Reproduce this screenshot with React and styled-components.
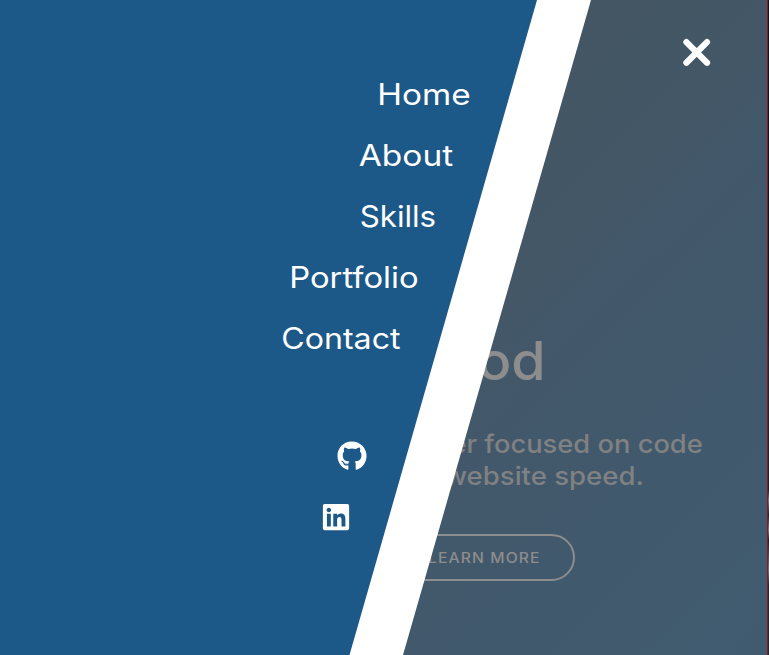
import React from "react";
import styled, { createGlobalStyle } from "styled-components";
import { FaGithub, FaLinkedin } from "react-icons/fa";

const GlobalStyle = createGlobalStyle`
  * { box-sizing: border-box; }
  body { margin: 0; overflow: hidden; font-family: Inter, "Open Sans", sans-serif; }
`;

const Page = styled.div`
  position: relative;
  display: grid;
  grid-template-columns: 1fr 2px;
  width: 100%;
  height: 100vh;
  overflow: hidden;
`;

const Hero = styled.main`
  display: flex;
  flex-direction: column;
  align-items: flex-end;
  padding-top: 329px;
  background: linear-gradient(135deg, #465462 20%, #445663 45%, #42586b 68%, #405b70 100%);
`;

const Photo = styled.aside`
  border-left: 1px solid #861b22;
  background: linear-gradient(#11161a 0 320px, #24282b 350px, #222 490px, #777 500px, #252525 515px, #817777 530px, #251d1d 540px, #737373 570px, #24292c 585px);
`;

const Fit = styled.span`
  display: block;
  white-space: nowrap;
  transform: scaleX(${(p) => p.$scale || 1});
  transform-origin: right center;
`;

const Name = styled.h1`
  margin: 0 221px 0 0;
  font-size: 53px;
  line-height: 65px;
  font-weight: 450;
  color: #8d8d8d;
`;

const Tagline = styled.p`
  display: flex;
  flex-direction: column;
  margin: 34px 0 0;
  font-size: 25.5px;
  line-height: 32px;
  font-weight: 500;
  color: #7f8182;
`;

const Line = styled.span`
  display: flex;
  justify-content: flex-end;
  margin-right: ${(p) => p.$inset}px;
`;

const LearnMore = styled.button`
  display: flex;
  align-items: center;
  justify-content: flex-end;
  width: 184px;
  height: 47px;
  margin: 42px 192px 0 0;
  padding: 0 32px 0 0;
  border: 2px solid #8d8d8d;
  border-radius: 24px;
  background: none;
  font: 500 14px Inter, sans-serif;
  letter-spacing: 1px;
  color: #8d8d8d;
`;

const Stripe = styled.div`
  position: absolute;
  inset: 0;
  background: #fff;
  clip-path: polygon(0 0, 591px 0, 403px 655px, 0 655px);
`;

const Menu = styled.nav`
  position: absolute;
  inset: 0;
  padding-top: 63px;
  background: #1c5888;
  clip-path: polygon(0 0, 537px 0, 349.5px 655px, 0 655px);
`;

const Links = styled.ul`
  display: flex;
  flex-direction: column;
  width: 471px;
  margin: 0;
  padding: 0;
  list-style: none;
`;

const Item = styled.li`
  display: flex;
  align-items: center;
  justify-content: flex-end;
  height: 61px;
  margin-right: ${(p) => p.$inset}px;
`;

const MenuLink = styled.a`
  font-size: 29.5px;
  line-height: 36px;
  font-weight: 370;
  color: #fff;
`;

const Socials = styled.div`
  display: flex;
  flex-direction: column;
  align-items: flex-end;
  gap: 31px;
  width: 366px;
  margin-top: 73px;
  color: #fff;
`;

const Social = styled.a`
  display: flex;
  margin-right: ${(p) => p.$inset}px;
  svg { display: block; }
`;

const Close = styled.button`
  position: absolute;
  top: 38px;
  left: 682px;
  padding: 0;
  border: 0;
  background: none;
  svg { display: block; }
`;

const links = [
  { label: "Home", inset: 0, scale: 1.13 },
  { label: "About", inset: 18, scale: 1.135 },
  { label: "Skills", inset: 35, scale: 1.06 },
  { label: "Portfolio", inset: 52.5, scale: 1.11 },
  { label: "Contact", inset: 70.5, scale: 1.09 },
];

export default function App() {
  return (
    <Page>
      <GlobalStyle />
      <Hero>
        <Name><Fit $scale={1.05}>od</Fit></Name>
        <Tagline>
          <Line $inset={64.5}><Fit $scale={1.07}>er focused on code</Fit></Line>
          <Line $inset={123}><Fit $scale={1.08}>website speed.</Fit></Line>
        </Tagline>
        <LearnMore><Fit $scale={1.12}>LEARN MORE</Fit></LearnMore>
      </Hero>
      <Photo />
      <Stripe />
      <Menu>
        <Links>
          {links.map(({ label, inset, scale }) => (
            <Item key={label} $inset={inset}>
              <MenuLink><Fit $scale={scale}>{label}</Fit></MenuLink>
            </Item>
          ))}
        </Links>
        <Socials>
          <Social $inset={-0.5} aria-label="GitHub"><FaGithub size={30} /></Social>
          <Social $inset={15} aria-label="LinkedIn"><FaLinkedin size={30} /></Social>
        </Socials>
      </Menu>
      <Close aria-label="Close menu">
        <svg width="30" height="30" viewBox="0 0 30 30" fill="none" stroke="#fff" strokeWidth="6.2" strokeLinecap="round">
          <path d="M4.4 4.1 25 24.8M25 4.1 4.4 24.8" />
        </svg>
      </Close>
    </Page>
  );
}
